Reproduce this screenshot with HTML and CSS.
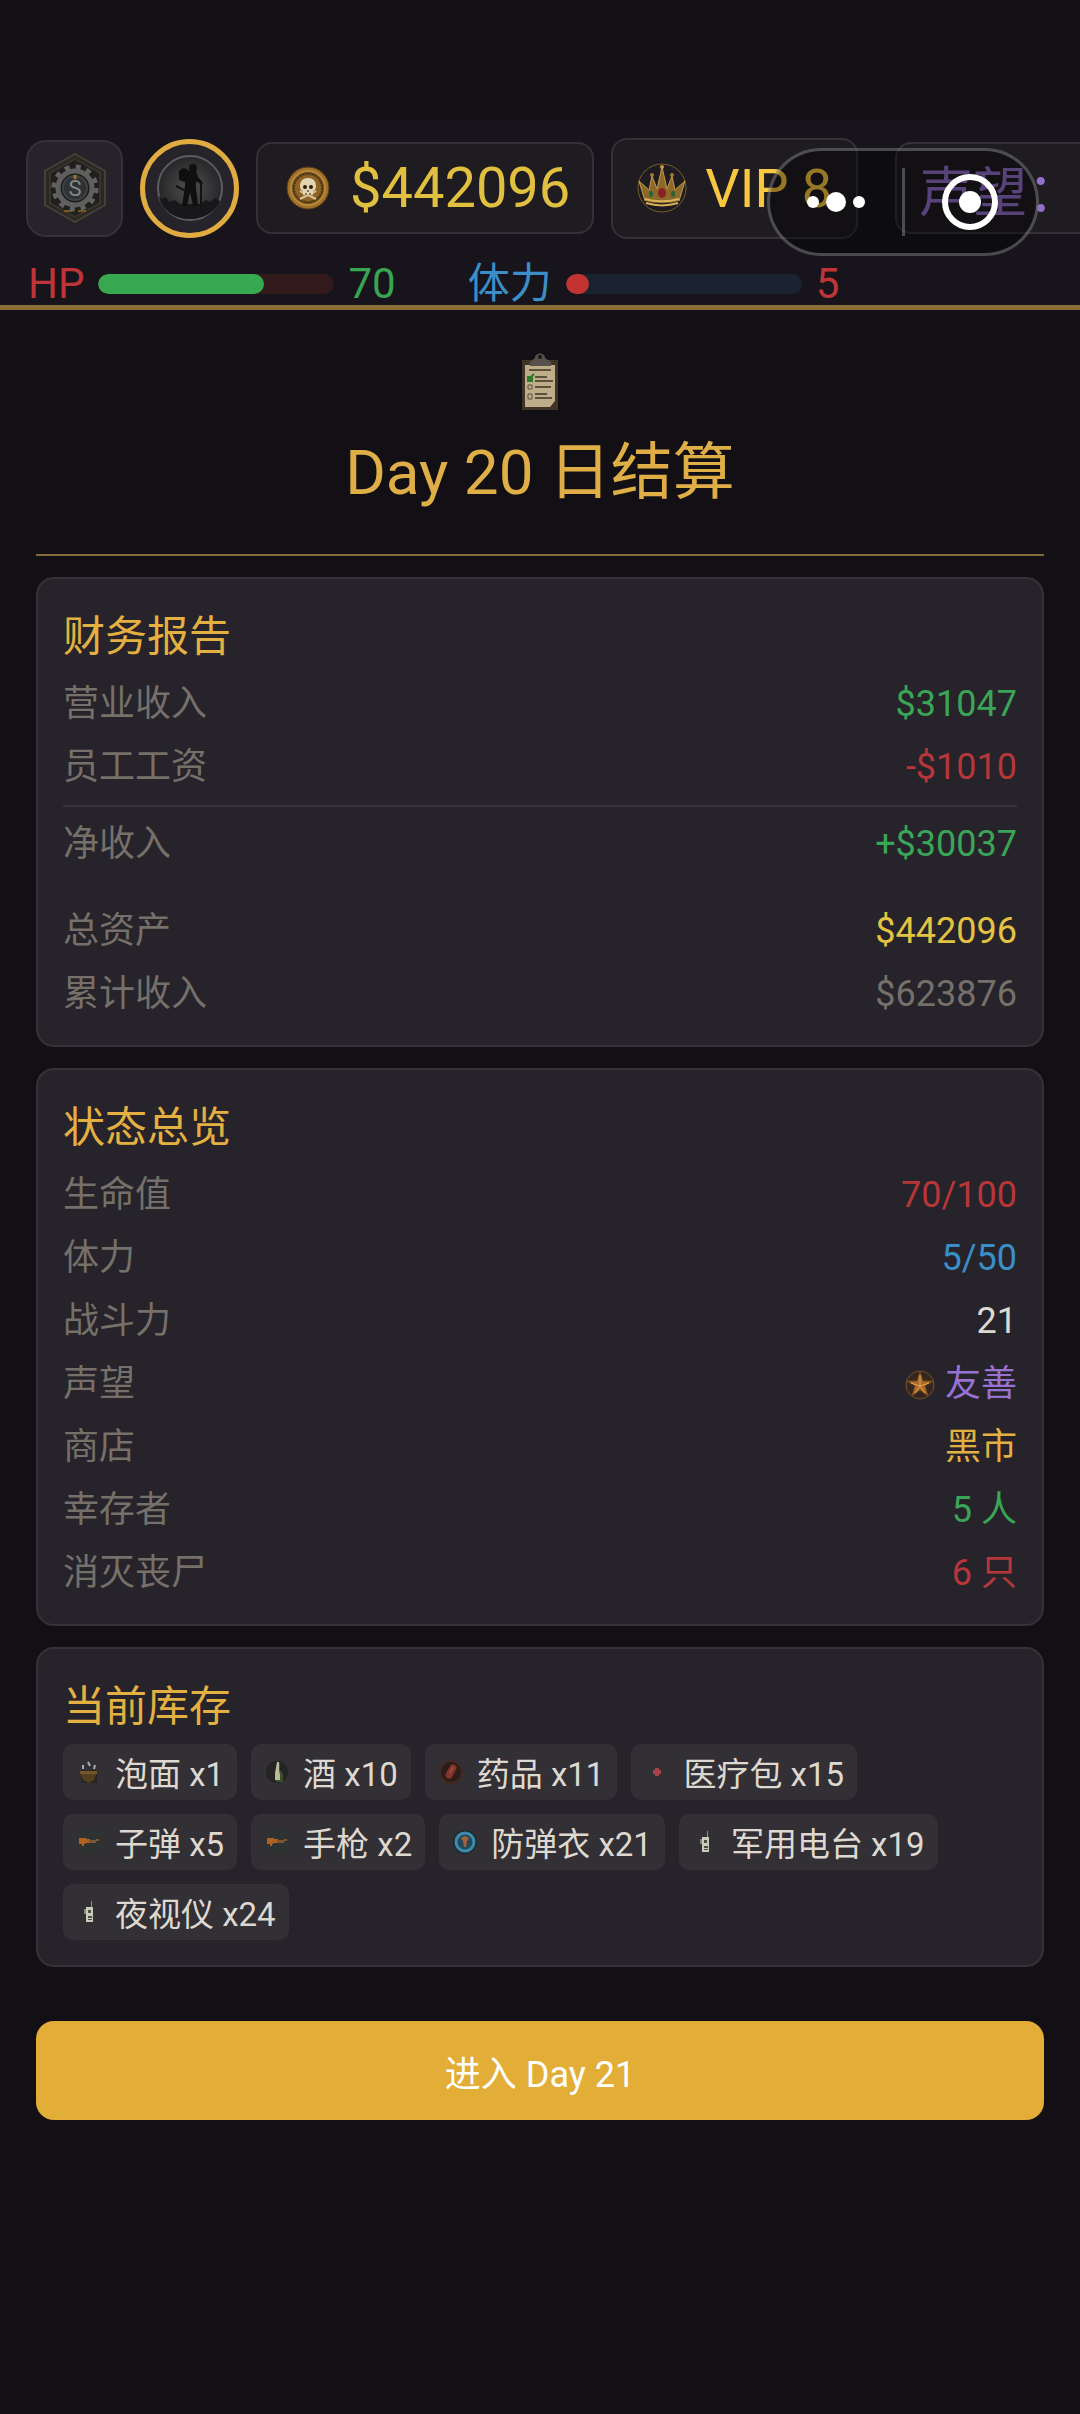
FILE: index.html
```
<!DOCTYPE html>
<html lang="zh-CN">
<head>
	<meta charset="utf-8">
	<meta name="viewport" content="width=device-width, initial-scale=1">
	<title>Day 20 日结算</title>
	<link rel="stylesheet" href="styles.css">
</head>
<body>

<!-- shared icons -->
<svg class="sprite" aria-hidden="true">
	<symbol id="i-gun" viewBox="0 0 26 26">
		<path fill="#2e3332" d="M1 1h24v24l-9-1-13 1z"/>
		<path fill="#b0601f" d="M3 9h7v1h4v4h-4l-1 1H8v2H6v-2H3z"/>
		<path fill="#7d5634" d="M13 11h7v-1h3v2h-3v2h-7z"/>
	</symbol>
	<symbol id="i-radio" viewBox="0 0 26 26">
		<path fill="#8d918a" d="M15 2h1v8h-1z"/>
		<path fill="#c9cbbb" d="M10 8h7v15h-7z"/>
		<path fill="#85897c" d="M8 10h2v5H8z"/>
		<path fill="#4b4f42" d="M12 11h3v3h-3zM12 17h4v2h-4zM12 20h4v1h-4z"/>
	</symbol>
</svg>

<header class="hud">
	<div class="hud-top">
		<button class="hud-btn" aria-label="设置">
			<svg width="62" height="70" viewBox="0 0 62 70">
				<path d="M31 1l30 17v34L31 69 1 52V18z" fill="#2b2822" stroke="#45413a" stroke-width="2"/>
				<path d="M31 6l25 14v30L31 64 6 50V20z" fill="#211f1c" stroke="#39352e" stroke-width="2"/>
				<path d="M20 58h8M34 58h8" stroke="#7a5524" stroke-width="2"/>
				<circle cx="31" cy="35" r="21" fill="none" stroke="#626263" stroke-width="5" stroke-dasharray="5 6"/>
				<circle cx="31" cy="35" r="17" fill="#1d1d1e" stroke="#5f5f60" stroke-width="5"/>
				<circle cx="31" cy="35" r="12" fill="#303133" stroke="#414244" stroke-width="2"/>
				<text class="gear-text" x="31" y="43" text-anchor="middle">S</text>
				<path d="M31 22v4" stroke="#a5702b" stroke-width="3"/>
			</svg>
		</button>
		<button class="hud-btn avatar" aria-label="角色">
			<svg width="68" height="68" viewBox="0 0 68 68">
				<defs>
					<radialGradient id="fog"><stop offset="0" stop-color="#505051"/><stop offset="1" stop-color="#262628"/></radialGradient>
				</defs>
				<circle cx="34" cy="34" r="32" fill="url(#fog)" stroke="#5d5d61" stroke-width="2"/>
				<path d="M3 42l3 3 4-2 3 5 6-2 5 4h20l6-4 4 2 5-4 5 3C61 57 48 65 34 65S5 57 3 42z" fill="#18181a"/>
				<circle cx="37" cy="14" r="4" fill="#0f0f10"/>
				<path fill="#0f0f10" d="M33 17h7l2 6 5 6-1 2-6-4v7l2 18h-5l-3-14-3 14h-5l3-20v-4l-6-2v-9l4-3 4 1z"/>
				<path d="M45 27v27M20 32l14 7" stroke="#121213" stroke-width="2"/>
			</svg>
		</button>
		<div class="stat money">
			<svg width="44" height="44" viewBox="0 0 44 44">
				<circle cx="22" cy="22" r="21" fill="#a07128" stroke="#563c16" stroke-width="1"/>
				<circle cx="22" cy="22" r="17" fill="#69481c" stroke="#b88838" stroke-width="2"/>
				<circle cx="22" cy="22" r="14" fill="#8d6326" stroke="#523713" stroke-width="2" stroke-dasharray="2 1"/>
				<path d="M14 25l16 8M30 25l-16 8" stroke="#d6c39c" stroke-width="2"/>
				<path d="M22 12c5 0 8 3 8 8 0 3-1 4-3 5v4H17v-4c-2-1-3-2-3-5 0-5 3-8 8-8z" fill="#e3d3b0"/>
				<circle cx="19" cy="21" r="2" fill="#2c1c09"/><circle cx="25" cy="21" r="2" fill="#2c1c09"/>
				<path d="M22 24v2M20 27v2M24 27v2" stroke="#2c1c09"/>
			</svg>
			<span>$442096</span>
		</div>
		<div class="stat vip">
			<svg width="50" height="50" viewBox="0 0 50 50">
				<circle cx="25" cy="25" r="24" fill="none" stroke="#7a5d28" stroke-width="1"/>
				<path d="M8 38L2 18l10 9 3-14 5 13 5-22 5 22 5-13 3 14 10-9-6 20c-10 3-24 3-34 0z" fill="#8b692b"/>
				<path d="M8 38L2 18l10 9 3-14 5 13 5-22 5 22 5-13 3 14 10-9-6 20" fill="none" stroke="#c59a45" stroke-width="1"/>
				<path d="M8 36c10 3 24 3 34 0M9 40c10 3 22 3 32 0" fill="none" stroke="#dab257" stroke-width="2"/>
				<ellipse cx="25" cy="30" rx="4" ry="5" fill="#8c2020"/>
				<ellipse cx="14" cy="31" rx="2" ry="3" fill="#2c6137"/><ellipse cx="36" cy="31" rx="2" ry="3" fill="#2c6137"/>
				<circle cx="25" cy="4" r="2" fill="#c59a45"/><circle cx="15" cy="12" r="2" fill="#a17a32"/><circle cx="35" cy="12" r="2" fill="#a17a32"/>
			</svg>
			<span>VIP 8</span>
		</div>
		<div class="stat rep">声望：</div>
	</div>

	<div class="hud-bars">
		<div class="bar-item hp">
			<span class="bar-name">HP</span>
			<div class="bar"><div class="fill" style="width:70%"></div></div>
			<span class="bar-num">70</span>
		</div>
		<div class="bar-item sp">
			<span class="bar-name">体力</span>
			<div class="bar"><div class="fill" style="width:10%"></div></div>
			<span class="bar-num">5</span>
		</div>
	</div>

	<!-- mini program capsule, floats over the hud -->
	<div class="capsule">
		<button aria-label="更多">
			<svg width="58" height="24" viewBox="0 0 58 24" fill="#fff"><circle cx="6" cy="12" r="6"/><circle cx="29" cy="12" r="10"/><circle cx="52" cy="12" r="6"/></svg>
		</button>
		<button aria-label="关闭">
			<svg width="58" height="58" viewBox="0 0 58 58"><circle cx="29" cy="29" r="25" fill="none" stroke="#fff" stroke-width="6"/><circle cx="29" cy="29" r="11" fill="#fff"/></svg>
		</button>
	</div>
</header>

<main>
	<div class="heading">
		<svg width="38" height="58" viewBox="0 0 38 58">
			<path fill="#3f3427" d="M1 7h36v50H1z"/>
			<path fill="#bdae89" d="M4 12h30v36l-5 6H4z"/>
			<path fill="#57504b" d="M14 5c0-6 10-6 10 0l6 4v4H9V9z"/>
			<circle cx="19" cy="4" r="2" fill="#1b1614"/>
			<path stroke="#5b513c" stroke-width="2" d="M8 17h22M14 24h12M14 28h18M14 34h16M14 41h12M14 45h17"/>
			<path fill="none" stroke="#5b513c" d="M7 32h4v4H7zM7 41h4v5H7z"/>
			<path fill="#2f7a2b" d="M6 23h6v6H6z"/><path fill="none" stroke="#2f7a2b" stroke-width="2" d="M8 26l5-5"/>
		</svg>
		<h1>Day 20 日结算</h1>
	</div>

	<section class="card">
		<h2>财务报告</h2>
		<dl>
			<div class="row"><dt>营业收入</dt><dd class="green">$31047</dd></div>
			<div class="row"><dt>员工工资</dt><dd class="red">-$1010</dd></div>
			<div class="row net"><dt>净收入</dt><dd class="green">+$30037</dd></div>
			<div class="row total"><dt>总资产</dt><dd class="yellow">$442096</dd></div>
			<div class="row"><dt>累计收入</dt><dd class="grey">$623876</dd></div>
		</dl>
	</section>

	<section class="card">
		<h2>状态总览</h2>
		<dl>
			<div class="row"><dt>生命值</dt><dd class="red">70/100</dd></div>
			<div class="row"><dt>体力</dt><dd class="blue">5/50</dd></div>
			<div class="row"><dt>战斗力</dt><dd>21</dd></div>
			<div class="row"><dt>声望</dt><dd class="purple">
				<svg width="30" height="30" viewBox="0 0 30 30"><circle cx="15" cy="15" r="14" fill="#35271f" stroke="#75502a" stroke-width="1"/><path fill="#a96b29" stroke="#754619" d="M15 2l3 9h10l-8 5 3 10-8-6-8 6 3-10-8-5h10z"/><path stroke="#e5a850" d="M15 5v11M15 16l9-3M15 16l5 7M15 16l-5 7M15 16l-9-3"/></svg>
				友善</dd></div>
			<div class="row"><dt>商店</dt><dd class="gold">黑市</dd></div>
			<div class="row"><dt>幸存者</dt><dd class="green">5 人</dd></div>
			<div class="row"><dt>消灭丧尸</dt><dd class="red">6 只</dd></div>
		</dl>
	</section>

	<section class="card">
		<h2>当前库存</h2>
		<ul class="items">
			<li>
				<svg viewBox="0 0 26 26"><path fill="#29241f" d="M5 11h16v13H5z"/><path fill="#54401f" d="M4 13h17l-3 8-5 3-6-3z"/><path fill="#74562b" d="M4 12h17v3H4z"/><path stroke="#a9adb0" stroke-width="2" d="M7 6v4M12 3l2 4M19 6l-1 4"/></svg>
				泡面 x1
			</li>
			<li>
				<svg viewBox="0 0 26 26"><circle cx="13" cy="13" r="11" fill="#242423"/><path fill="#3b5030" d="M13 4h3v7l3 4v8h-7v-8z"/><path fill="#bbb89c" d="M13 3h2v8l1 5v5h-5v-7z"/></svg>
				酒 x10
			</li>
			<li>
				<svg viewBox="0 0 26 26"><circle cx="13" cy="13" r="11" fill="#2b1d19" stroke="#43291f" stroke-width="2"/><path fill="none" stroke="#84352b" stroke-width="7" stroke-linecap="round" d="M15 9l-4 7"/><path stroke="#b5604f" d="M15 8l-3 6"/></svg>
				药品 x11
			</li>
			<li>
				<svg viewBox="0 0 26 26"><path fill="#a8434b" d="M11 9h4v2h2v4h-2v2h-4v-2H9v-4h2z"/></svg>
				医疗包 x15
			</li>
			<li><svg><use href="#i-gun"/></svg>子弹 x5</li>
			<li><svg><use href="#i-gun"/></svg>手枪 x2</li>
			<li>
				<svg viewBox="0 0 26 26"><circle cx="13" cy="13" r="12" fill="#1c2a31"/><circle cx="13" cy="13" r="9" fill="#24485a" stroke="#3c8dad" stroke-width="3"/><path fill="#a0623d" d="M9 9l4-2 4 2-2 3-1 6h-2l-1-6z"/></svg>
				防弹衣 x21
			</li>
			<li><svg><use href="#i-radio"/></svg>军用电台 x19</li>
			<li><svg><use href="#i-radio"/></svg>夜视仪 x24</li>
		</ul>
	</section>

	<button class="next">进入 Day 21</button>
</main>

</body>
</html>
```
FILE: styles.css
```
* {
	box-sizing: border-box;
}

body {
	margin: 0;
	padding-top: 120px;
	background-color: #121014;
	color: #ded9d0;
	font-family: Roboto, "Noto Sans CJK SC", sans-serif;
	font-size: 36px;
	font-weight: 400;
	overflow-x: hidden;
}

button {
	font: inherit;
	border: 0;
	padding: 0;
	cursor: pointer;
}

svg {
	display: block;
	flex: none;
}

.sprite {
	display: none;
}

/* hud */
.hud {
	position: relative;
	padding: 17px 26px 0;
	background-color: #17141b;
	border-bottom: 5px solid #8b6d35;
	overflow: hidden;
}

.hud-top {
	display: flex;
	align-items: center;
	gap: 17px;
	height: 102px;
}

.hud-btn {
	display: flex;
	align-items: center;
	justify-content: center;
	flex: none;
	width: 97px;
	height: 97px;
	border: 2px solid #353237;
	border-radius: 20px;
	background-color: #26242a;
}

.gear-text {
	fill: #85888b;
	font-size: 22px;
}

.avatar {
	width: 99px;
	height: 99px;
	border: 5px solid #e0ab41;
	border-radius: 50%;
}

.stat {
	display: flex;
	align-items: center;
	flex: none;
	gap: 20px;
	height: 92px;
	padding: 0 22px 0 28px;
	border: 2px solid #353237;
	border-radius: 16px;
	background-color: #1e1b21;
	font-size: 54px;
	white-space: nowrap;
}

.money {
	color: #e2c03f;
	font-size: 56px;
}

.vip {
	height: 101px;
	padding: 0 24px;
	gap: 18px;
	color: #f8c63f;
}

.rep {
	margin-left: 20px;
	padding: 0 22px;
	color: #9270cc;
}

.hud-bars {
	display: flex;
	gap: 72px;
	margin-top: 23px;
	padding-left: 2px;
	font-size: 42px;
	line-height: 43px;
}

.bar-item {
	display: flex;
	align-items: center;
	gap: 14px;
}

.bar {
	width: 236px;
	height: 20px;
	border-radius: 10px;
	overflow: hidden;
}

.fill {
	height: 100%;
	border-radius: 10px;
}

.hp .bar-name, .sp .bar-num {
	color: #bf3437;
}

.hp .bar-num {
	color: #37a652;
}

.hp .bar {
	background-color: #32191b;
}

.hp .fill {
	background-color: #37a84f;
}

.sp .bar-name {
	color: #3a8fc9;
}

.sp .bar {
	background-color: #1a2330;
}

.sp .fill {
	background-color: #c23331;
}

.capsule {
	position: absolute;
	top: 28px;
	right: 41px;
	display: flex;
	align-items: center;
	width: 272px;
	height: 108px;
	border: 3px solid rgba(255, 255, 255, 0.25);
	border-radius: 54px;
	background-color: rgba(0, 0, 0, 0.4);
}

.capsule button {
	flex: 1;
	display: flex;
	align-items: center;
	justify-content: center;
	height: 68px;
	background: none;
}

.capsule button + button {
	border-left: 3px solid rgba(255, 255, 255, 0.25);
}

/* settlement */
main {
	display: flex;
	flex-direction: column;
	gap: 21px;
	padding: 43px 36px;
}

.heading {
	display: flex;
	flex-direction: column;
	align-items: center;
	gap: 14px;
	padding-bottom: 33px;
	border-bottom: 2px solid #856a3b;
}

h1 {
	margin: 0;
	color: #dfae46;
	font-size: 62px;
	font-weight: 400;
	line-height: 96px;
}

.card {
	padding: 22px 25px 19px;
	border: 2px solid #343236;
	border-radius: 18px;
	background-color: #26232a;
}

h2 {
	margin: 4px 0 5px;
	color: #e3b041;
	font-size: 42px;
	font-weight: 400;
	line-height: 63px;
}

dl, dd {
	margin: 0;
}

.row {
	display: flex;
	justify-content: space-between;
	line-height: 63px;
}

.row dt {
	color: #757069;
}

.row dd {
	display: flex;
	align-items: center;
	gap: 10px;
}

.net {
	margin-top: 6px;
	padding-top: 6px;
	border-top: 2px solid #38353a;
}

.total {
	margin-top: 24px;
}

.green { color: #3ba557; }
.red { color: #b6363a; }
.yellow { color: #e4c343; }
.gold { color: #e3b041; }
.blue { color: #3a8fc9; }
.purple { color: #9672d2; }
.grey { color: #757069; }

.items {
	display: flex;
	flex-wrap: wrap;
	gap: 14px;
	margin: 6px 0;
	padding: 0;
	list-style: none;
}

.items li {
	display: flex;
	align-items: center;
	gap: 13px;
	height: 56px;
	padding: 0 13px;
	border-radius: 10px;
	background-color: #322f35;
	font-size: 33px;
}

.items svg {
	width: 26px;
	height: 26px;
}

.next {
	height: 99px;
	margin-top: 33px;
	border-radius: 18px;
	background-color: #e3ae37;
	color: #fff;
}
```
